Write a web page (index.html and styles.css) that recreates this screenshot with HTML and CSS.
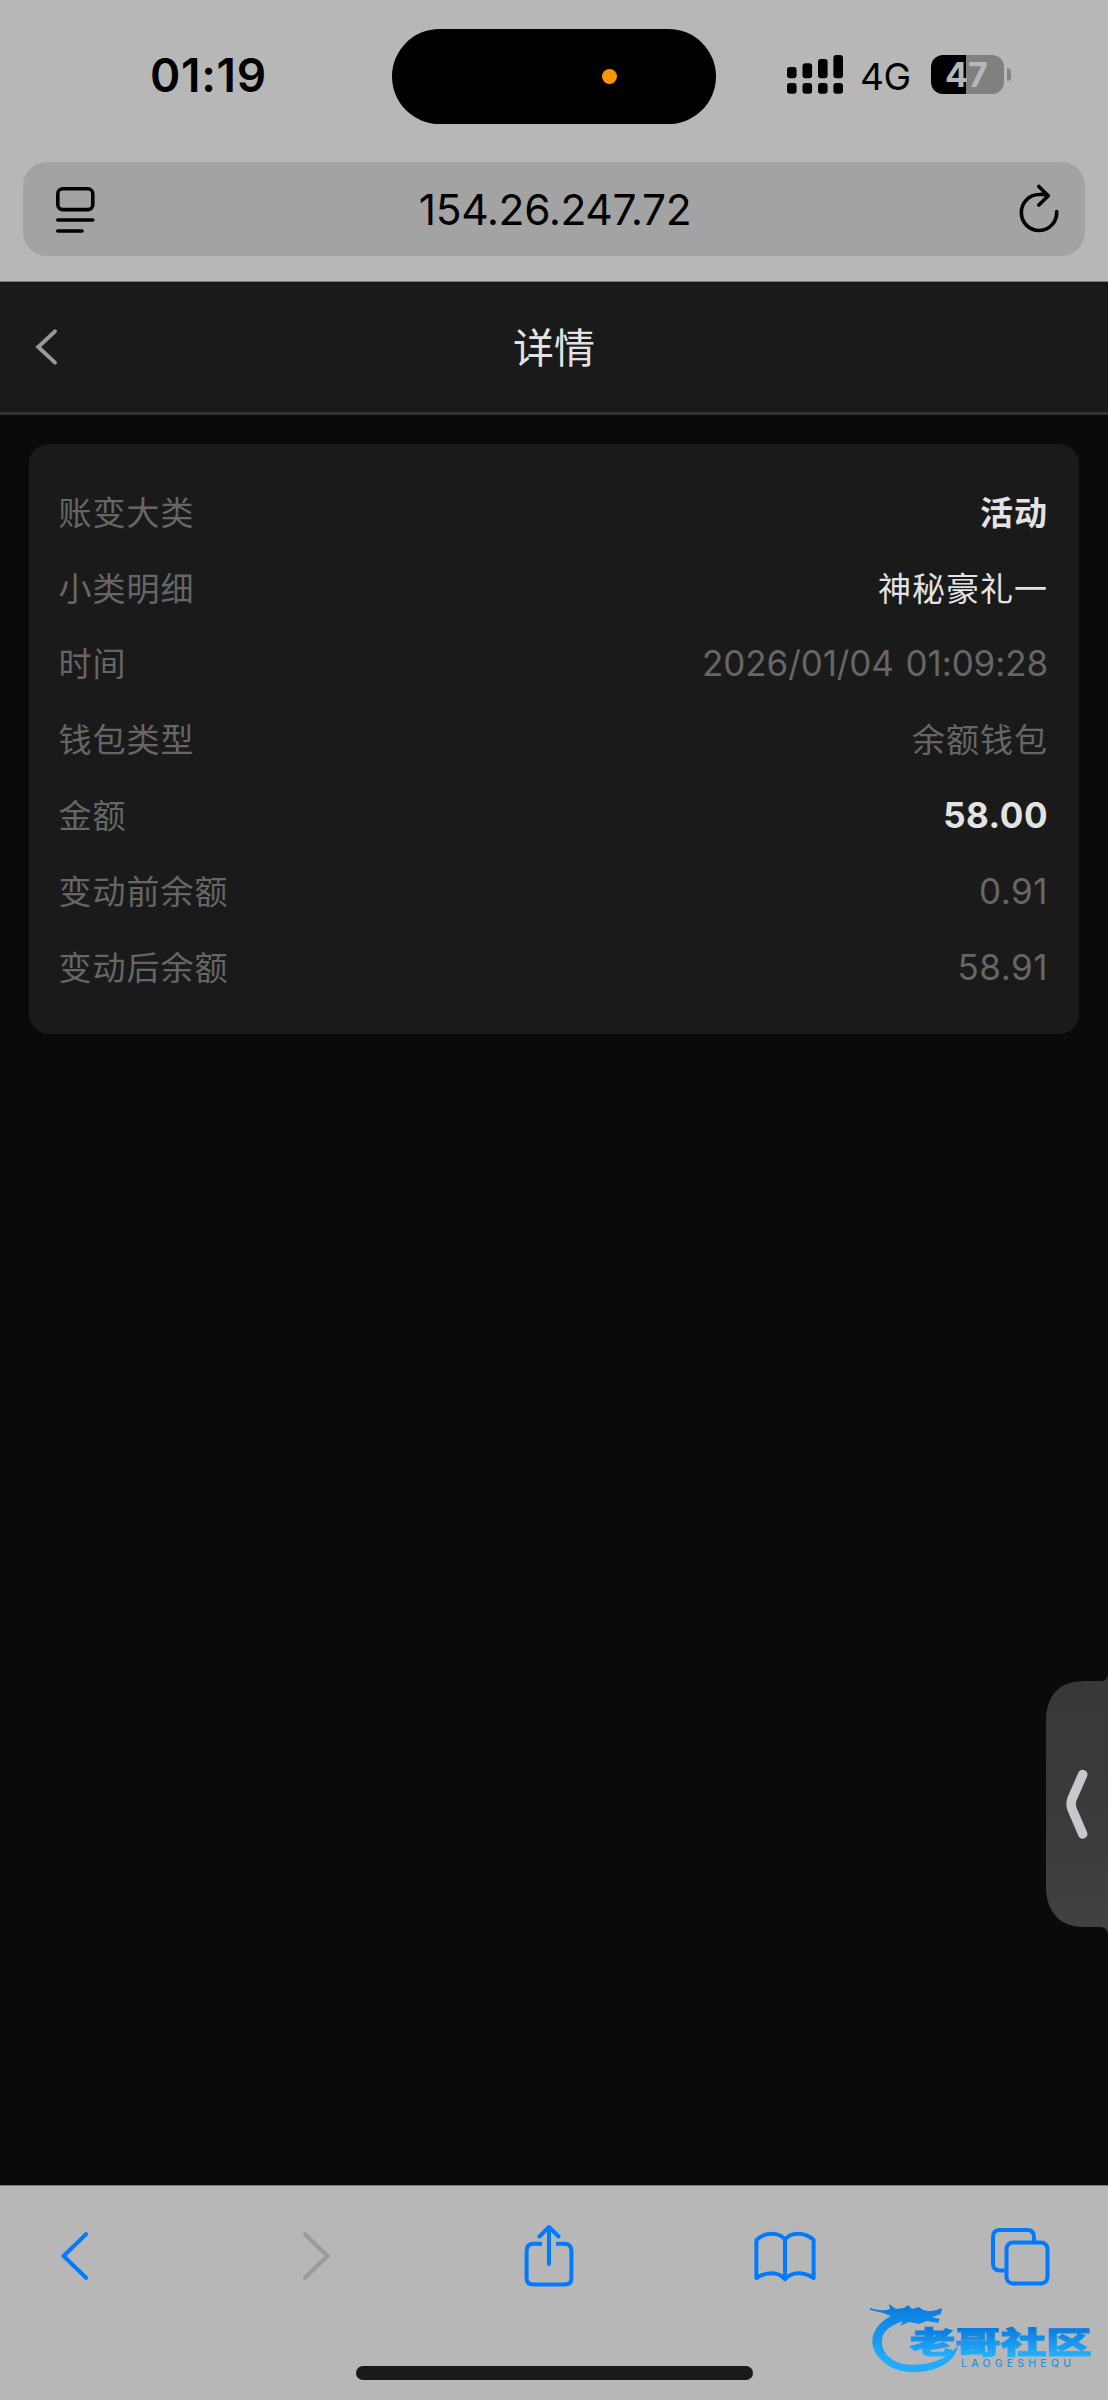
FILE: index.html
```html
<!DOCTYPE html>
<html lang="zh-CN">
<head>
<meta charset="utf-8">
<title>详情</title>
<link rel="stylesheet" href="styles.css">
</head>
<body>
<div class="phone">
  <div class="browser-top">
    <div class="status-bar">
      <span class="clock">01:19</span>
      <div class="island"><span class="island-dot"></span></div>
      <div class="status-right">
        <svg class="signal" width="56" height="39" viewBox="0 0 56 39">
          <rect x="0" y="12" width="9.6" height="11.3" rx="3"/><rect x="15.5" y="8.3" width="9.6" height="15" rx="3"/><rect x="31" y="4" width="9.6" height="19.3" rx="3"/><rect x="46.4" y="0" width="9.6" height="23.3" rx="3"/>
          <rect x="0" y="28" width="9.6" height="10.7" rx="3"/><rect x="15.5" y="28" width="9.6" height="10.7" rx="3"/><rect x="31" y="28" width="9.6" height="10.7" rx="3"/><rect x="46.4" y="28" width="9.6" height="10.7" rx="3"/>
        </svg>
        <span class="network">4G</span>
        <div class="battery"><span>47</span></div>
        <span class="battery-nub"></span>
      </div>
    </div>
    <div class="address">
      <svg width="44" height="50" viewBox="0 0 44 50" class="line-icon">
        <rect x="3.8" y="4.8" width="35" height="20.8" rx="5"/><path d="M3.8 36H38.8M3.8 47H28"/>
      </svg>
      <span class="url">154.26.247.72</span>
      <svg width="44" height="52" viewBox="0 0 44 52" class="line-icon">
        <path d="M39.7 28.5A17.7 18 0 1 1 22 11.5Q27 11 30.5 12.3M21.8 3.5L31.3 12.8L21.8 22"/>
      </svg>
    </div>
  </div>

  <header class="page-header">
    <svg width="26" height="40" viewBox="0 0 26 40" class="back"><path d="M22 4.4L5.3 20L22 35.6"/></svg>
    <h1>详情</h1>
  </header>

  <main class="content">
    <dl class="card">
      <div class="row"><dt>账变大类</dt><dd class="strong">活动</dd></div>
      <div class="row"><dt>小类明细</dt><dd class="bright">神秘豪礼一</dd></div>
      <div class="row"><dt>时间</dt><dd class="date">2026/01/04 01:09:28</dd></div>
      <div class="row"><dt>钱包类型</dt><dd>余额钱包</dd></div>
      <div class="row"><dt>金额</dt><dd class="strong amount">58.00</dd></div>
      <div class="row"><dt>变动前余额</dt><dd class="num">0.91</dd></div>
      <div class="row"><dt>变动后余额</dt><dd class="num">58.91</dd></div>
    </dl>
  </main>

  <svg class="side-tab" width="62" height="258" viewBox="0 0 62 258">
    <defs><linearGradient id="tab" x1="0" y1="0" x2="0" y2="1"><stop offset="0" stop-color="#383838"/><stop offset=".5" stop-color="#3a3a3a"/><stop offset="1" stop-color="#424244"/></linearGradient></defs>
    <path fill="url(#tab)" d="M62 0Q61 6 55 6H38C14 6 0 20 0 46V211C0 237 14 252 38 252H55Q60 252 62 258Z"/>
    <path class="side-chevron" d="M36.7 99.5L26 124Q24.2 129 26 134L36.7 159"/>
  </svg>

  <footer class="browser-bottom">
    <nav class="toolbar">
      <svg width="27" height="48" viewBox="0 0 27 48"><path d="M25 2.2L2.6 24L25 45.8"/></svg>
      <svg width="27" height="48" viewBox="0 0 27 48" class="disabled"><path d="M2 2.2L24.4 24L2 45.8"/></svg>
      <svg width="50" height="62" viewBox="0 0 50 62"><path stroke-linecap="butt" d="M18 18.8H10Q2.6 18.8 2.6 26.2V53.2Q2.6 59.6 9.6 59.6H40.4Q47.4 59.6 47.4 53.2V26.2Q47.4 18.8 40 18.8H32"/><path d="M25 39V2M15.5 11.5L25 1.8L34.5 11.5"/></svg>
      <svg width="62" height="51" viewBox="0 0 62 51"><path d="M31 48.2V8.5C25.5 1 11 .5 2.4 9V47C12 41 24 40 31 48.2C38 40 50 41 59.6 47V9C51 .5 36.5 1 31 8.5"/></svg>
      <svg width="60" height="59" viewBox="0 0 60 59"><path d="M14 43.5H10Q3 43.5 3 36.5V10Q3 3 10 3H37Q44 3 44 10V15"/><rect x="16.5" y="15.5" width="41" height="41" rx="6.5"/></svg>
    </nav>
    <div class="home-indicator"></div>
  </footer>

  <svg class="watermark" width="238" height="90" viewBox="0 0 238 90">
    <defs><linearGradient id="wm" gradientUnits="userSpaceOnUse" x1="0" y1="14" x2="0" y2="82"><stop offset="0" stop-color="#0879dc"/><stop offset=".8" stop-color="#22abfb"/><stop offset="1" stop-color="#22abfb"/></linearGradient>
    <linearGradient id="wt" gradientUnits="userSpaceOnUse" x1="0" y1="37" x2="0" y2="66"><stop offset="0" stop-color="#0879dc"/><stop offset="1" stop-color="#24b0fd"/></linearGradient></defs>
    <path fill="url(#wm)" d="M0 18Q12 22 20 19L19 14L26 19L34 18L38 15L42 19L49 17L53 20Q62 23 72 18L71 24L62 27L70 29L68 33L57 31L49 34L39 32L30 36L33 31C20 36 11 41 12 54C15 72 35 77 54 74C72 71 82 64 88 55Q87 65 77 73C62 83 36 86 19 76C-5 61 -2 38 21 26Q12 22 0 20Z"/>
    <text class="wm-name" x="39.5" y="63" textLength="182" lengthAdjust="spacingAndGlyphs">老哥社区</text>
    <text class="wm-latin" x="91" y="77" textLength="110" lengthAdjust="spacing">LAOGESHEQU</text>
  </svg>
</div>
</body>
</html>
```
FILE: styles.css
```css
* { box-sizing: border-box; }
body { margin: 0; background: #0a0a0a; font-family: Inter, "Noto Sans CJK SC", sans-serif; }
.phone { position: relative; width: 1108px; height: 2400px; display: flex; flex-direction: column; overflow: hidden; }
svg { display: block; flex: none; }

.browser-top { height: 282px; background: #b7b7b7; border-bottom: 1px solid #777; flex: none; }
.status-bar { height: 162px; padding-top: 29px; display: grid; grid-template-columns: 392px 324px 392px; }
.clock { padding: 18px 0 0 150px; font-size: 46px; line-height: 56px; font-weight: 600; letter-spacing: 0.7px; color: #000; }
.island { height: 95px; border-radius: 48px; background: #000; display: flex; align-items: center; padding-left: 210px; }
.island-dot { width: 15px; height: 15px; border-radius: 50%; background: #ff9500; }
.status-right { display: flex; align-items: center; height: 39px; margin: 26px 0 0 71px; }
.network { width: 88px; padding-left: 17px; font-size: 37px; line-height: 39px; letter-spacing: -0.5px; padding-top: 3px; font-weight: 400; }
.battery { width: 73px; height: 39px; padding-right: 2px; border-radius: 12px; background: linear-gradient(90deg, #000 35px, #808080 35px); text-align: center; color: #b7b7b7; font-size: 34px; line-height: 39px; font-weight: 700; }
.battery-nub { width: 4px; height: 13px; margin-left: 3px; background: #858585; border-radius: 0 5px 5px 0; }

.address { height: 94px; margin: 0 23px; padding: 0 24px 0 31px; border-radius: 24px; background: #a3a3a3; display: flex; align-items: center; justify-content: space-between; }
.line-icon { fill: none; stroke: #000; stroke-width: 3.6; stroke-linecap: round; stroke-linejoin: round; }
.url { padding-top: 2px; margin-left: -5px; font-size: 42.5px; line-height: 52px; letter-spacing: -0.4px; }

.page-header { height: 133px; flex: none; background: #1a1a1a; border-bottom: 3px solid #333; display: grid; grid-template-columns: 100px 1fr 100px; align-items: center; }
.back { margin-left: 33px; fill: none; stroke: #999; stroke-width: 4; stroke-linecap: round; }
.page-header h1 { margin: 0; padding-top: 2px; font-size: 41px; line-height: 60px; font-weight: 400; text-align: center; color: #e3e3e3; }

.content { flex: 1; padding: 29px 29px 0; }
.card { margin: 0; height: 590px; border-radius: 20px; background: #1a1a1a; padding: 31px 31px 28px 29.5px; }
.row { height: 75.8px; display: flex; justify-content: space-between; align-items: center; font-size: 33px; line-height: 48px; letter-spacing: 1px; color: #666; }
.row dd { margin: 0; }
.row .strong { color: #e3e3e3; font-weight: 700; }
.row .bright { color: #e3e3e3; }
.row .date, .row .num, .row .amount { padding-bottom: 2px; font-size: 35px; letter-spacing: 0.5px; }
.row .date { letter-spacing: -0.1px; word-spacing: 2px; }

.side-tab { position: absolute; left: 1046px; top: 1675px; }
.side-chevron { fill: none; stroke: #c8c7ce; stroke-width: 9.5; stroke-linecap: round; stroke-linejoin: round; }

.browser-bottom { height: 215px; flex: none; background: #b7b7b7; border-top: 1px solid #777; display: flex; flex-direction: column; align-items: center; justify-content: space-between; padding-bottom: 20px; }
.toolbar { width: 100%; height: 140px; padding-left: 61px; display: grid; grid-template-columns: 242px 221px 230px 236px 1fr; align-items: center; fill: none; stroke: #007aff; stroke-width: 4; stroke-linecap: round; stroke-linejoin: round; }
.toolbar .disabled { stroke: #9b9b9b; }
.home-indicator { width: 397px; height: 14px; border-radius: 7px; background: #1a1a1a; }

.watermark { position: absolute; left: 870px; top: 2290px; }
.wm-name { font: 900 30px "Noto Sans CJK SC", sans-serif; fill: url(#wt); stroke: url(#wt); stroke-width: 1; }
.wm-latin { font: 500 10.5px Inter, sans-serif; fill: #2b90df; }
```
